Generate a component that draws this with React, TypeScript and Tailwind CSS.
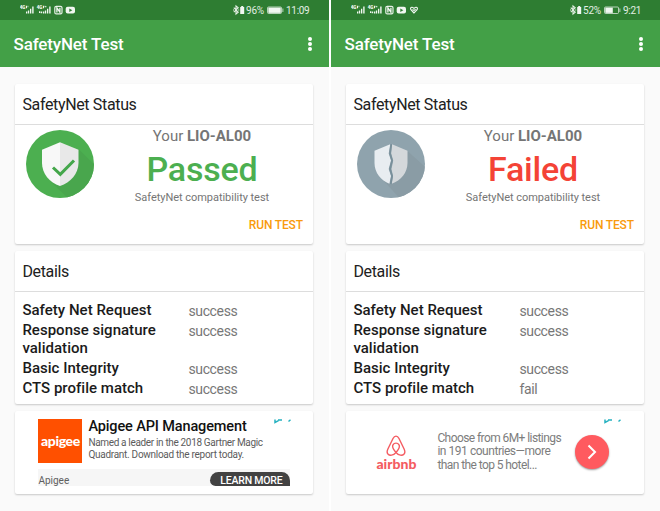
import React from "react";

type PhoneProps = { passed: boolean };

function Signal({ x, extra }: { x: number; extra: boolean }) {
  return (
    <g transform={`translate(${x} 0)`} fill="#f1f7f1">
      <text x="-.3" y="9.2" fontSize="4.6" fontWeight="900">4G</text>
      <path d="M6 11.600h1.300v2H6zM7.900 10.600h1.300v3H7.900zM10 8.700h1.300v4.900H10zM12.200 6.600h1.400v7h-1.400z" />
      <path d="M6 5.800h1v2.500H6zM7.600 5.800h.7v1.500h-.7z" />
      {extra && <path d="M2 11.200h1.200v1.800H2zM3.700 11.600h1.500v1.600H3.700zM8.300 6h1v1.300h-1z" />}
    </g>
  );
}

function StatusIcons({ passed }: PhoneProps) {
  return (
    <svg width="80" height="20" viewBox="0 0 80 20" className="block font-['Roboto',sans-serif]">
      <Signal x={0} extra={false} />
      <Signal x={17} extra />
      <rect x="34.800" y="6.300" width="7.200" height="7.600" rx="1.500" fill="none" stroke="#e6f0e6" strokeWidth="1.200" />
      <path d="M36.900 12.500V7.900l3 4.300V7.700" fill="none" stroke="#f1f7f1" strokeWidth="1.300" />
      <rect x="45.700" y="6.800" width="9.300" height="6.800" rx="2" fill="#f1f7f1" />
      <path d="M49.300 8.500v3.400l3-1.700z" fill="#2e7d32" />
      {!passed && (
        <path d="M63 13 59.900 9.700c-.8-1.200-.2-2.500 1-2.500.9 0 1.400.5 2.100 1.300.7-.8 1.200-1.300 2.100-1.300 1.200 0 1.800 1.300 1 2.500zM61.500 9.300l1.500 1.300 1.600-1.500" fill="none" stroke="#f1f7f1" strokeWidth="1.100" />
      )}
    </svg>
  );
}

function BluetoothIcon() {
  return (
    <svg width="13" height="20" viewBox="0 0 13 20" className="block">
      <path d="M.8 7.700 5.200 12.200 3 14V5.900L5.200 7.800.8 12.200M0 10h1M5.200 10h1" fill="none" stroke="#e6f0e6" strokeWidth="1.100" />
      <path d="M7.200 7h1V6h2v1h1v6.900h-4z" fill="#f1f7f1" />
    </svg>
  );
}

function Battery({ level }: { level: number }) {
  return (
    <svg width="17" height="20" viewBox="0 0 17 20" className="block">
      <rect x=".5" y="7" width="14" height="6.500" rx="1" fill="none" stroke="#dbe9dc" strokeWidth=".8" />
      <rect x="1.300" y="7.600" width={level} height="5.300" fill="#f1f7f1" />
      <path d="M15.500 8.500h.8v3.500h-.8z" fill="#dbe9dc" />
    </svg>
  );
}

function PassedShield() {
  return (
    <svg width="68" height="68" viewBox="0 0 68 68" className="block shrink-0">
      <clipPath id="ring-pass"><circle cx="34" cy="34" r="34" /></clipPath>
      <circle cx="34" cy="34" r="34" fill="#4caf50" />
      <path clipPath="url(#ring-pass)" d="M52.500 19 72 38.500V72H46L25 52l20-10z" fill="#49a64d" />
      <path d="M34 12.300 16 19.800V33c0 10.500 7.500 19.500 18 23z" fill="#f8f8f8" />
      <path d="M34 12.300 52.500 19.800V33c0 10.500-8 19.500-18.500 23z" fill="#e8e8e8" />
      <path d="m27 37.500 7.300 6.800L48 30.500" fill="none" stroke="#43a64a" strokeWidth="3" />
    </svg>
  );
}

function BrokenShield() {
  return (
    <svg width="68" height="68" viewBox="0 0 68 68" className="block shrink-0">
      <clipPath id="ring-fail"><circle cx="34" cy="34" r="34" /></clipPath>
      <circle cx="34" cy="34" r="34" fill="#8fa3ad" />
      <path clipPath="url(#ring-fail)" d="M50.500 21 72 40.500V72H46L26 50l20-10z" fill="#8a9ca5" />
      <path d="M33.200 14.200 17.500 20.700V33c0 9.500 6.500 17.500 14.900 20.700L34 46l-2.300-7 2.300-8.500-2.300-7z" fill="#e8edf1" />
      <path d="M35 14.200 50.500 20.700V33c0 9.500-6.500 17.500-15.700 20.700L36 46l-1.500-7 1.700-8.500-2-7z" fill="#d4d8db" />
      <path d="m34.300 14.200-1.300 9.300 2.100 7L33 39l2.100 7-1.400 8" fill="none" stroke="#788f9a" strokeWidth="1.700" />
    </svg>
  );
}

function AdMark() {
  return (
    <svg width="18" height="5" viewBox="0 0 18 5" className="block shrink-0">
      <path d="M1 .5v3l3.500-1.900M4 1h4M14.500 2.500 16.500.8" fill="none" stroke="#25b1c0" strokeWidth="1.500" />
    </svg>
  );
}

function ApigeeAd() {
  return (
    <div className="flex h-[83px] w-[298px] flex-col pl-[23px] pt-2">
      <div className="flex h-[50px]">
        <div className="flex h-[44px] w-[44px] shrink-0 items-center justify-center bg-[#ff5000] pb-px font-['Lato',sans-serif] text-[14px] font-black leading-none tracking-[-0.4px] text-white">
          apigee
        </div>
        <div className="w-[192px] shrink-0 whitespace-nowrap pl-1.5">
          <div className="-mt-px h-[18px] text-[14.500px] font-medium leading-[18px] tracking-[-0.13px] text-[#111]">Apigee API Management</div>
          <div className="pt-px text-[10px] leading-[11.500px] tracking-[-0.34px] text-[#5c5c5c]">
            Named a leader in the 2018 Gartner Magic
            <br />
            <span className="tracking-[-0.28px]">Quadrant. Download the report today.</span>
          </div>
        </div>
        <AdMark />
      </div>
      <div className="flex h-[17px] w-[252px] items-start justify-between overflow-hidden bg-[#f6f6f6]">
        <span className="pt-[5px] text-[10px] leading-[14px] text-[#606060]">Apigee</span>
        <span className="mt-[3px] h-[14px] w-[80px] rounded-t-[9px] rounded-bl-[6px] bg-[#424242] pl-0.5 pt-[2px] text-center text-[10.500px] font-medium leading-[13px] tracking-[-0.2px] text-white">
          LEARN MORE
        </span>
      </div>
    </div>
  );
}

function AirbnbAd() {
  return (
    <div className="flex h-[83px] w-[298px] pt-2">
      <div className="flex w-[91px] shrink-0 flex-col items-center pl-[9px] pt-4">
        <svg width="20" height="21" viewBox="0 0 20 21" className="block">
          <path d="M10 17.500C6.500 13.500 6 11.500 7 9.800c1.300-2.200 4.700-2.200 6 0 1 1.700.5 3.700-3 7.700-2.800 3.200-6.300 3.300-7.900 1.700-1.600-1.500-1-3.500-.2-5.200L7 3.500C8.600.3 11.400.3 13 3.500L18.100 14c.8 1.700 1.400 3.700-.2 5.200-1.600 1.600-5.100 1.500-7.900-1.700z" fill="none" stroke="#f45b61" strokeWidth="1.400" />
        </svg>
        <div className="font-['Lato',sans-serif] text-[14px] font-black leading-[15px] text-[#f45b61]">airbnb</div>
      </div>
      <div className="w-[138px] shrink-0 whitespace-nowrap pt-[13px] text-[12px] leading-[13.400px] tracking-[-0.58px] text-[#7d7d7d]">
        Choose from 6M+ listings
        <br />
        <span className="tracking-[-0.46px]">in 191 countries—more</span>
        <br />
        than the top 5 hotel...
      </div>
      <div className="pt-4">
        <div className="flex h-[34px] w-[34px] items-center justify-center rounded-full bg-[#ff5a5f] shadow-[0_1px_2px_#0006]">
          <svg width="10" height="16" viewBox="0 0 10 16"><path d="m1.500 1.500 6.500 6.500-6.500 6.500" fill="none" stroke="white" strokeWidth="2" /></svg>
        </div>
      </div>
      <div className="-ml-[5px]"><AdMark /></div>
    </div>
  );
}

function Row({ label, value, tall }: { label: React.ReactNode; value: string; tall?: boolean }) {
  return (
    <div className={`flex leading-[17.500px] ${tall ? "h-[38px]" : "h-[20.200px]"}`}>
      <div className="w-[166px] whitespace-nowrap text-[15px] font-medium tracking-[0.02px] text-[#1b1b1b]">{label}</div>
      <div className="pt-[0.600px] text-[14px] tracking-[-0.35px] text-[#777]">{value}</div>
    </div>
  );
}

const card = "rounded-[2px] bg-white shadow-[0_1px_2px_#0003]";

function Phone({ passed }: PhoneProps) {
  return (
    <section className="h-[511px] w-[329px] bg-[#fafafa]">
      <div className="flex h-5 items-center justify-between bg-[#2e7d32] pl-5 text-[10px] text-[#e2eee3]">
        <StatusIcons passed={passed} />
        <div className={`flex items-center whitespace-nowrap ${passed ? "w-[96px]" : "w-[90px]"}`}>
          <BluetoothIcon />
          <span className="mr-px w-[20px] tracking-[-0.2px]">{passed ? "96%" : "52%"}</span>
          <Battery level={passed ? 12.5 : 7.5} />
          <span className="pl-0.5 tracking-[-0.3px]">{passed ? "11:09" : "9:21"}</span>
        </div>
      </div>
      <header className="flex h-[47px] items-center justify-between bg-[#43a047] pl-[13.500px] pr-[17px]">
        <h1 className="pt-px text-[17px] font-medium leading-5 tracking-[-0.15px] text-white">SafetyNet Test</h1>
        <div className="flex flex-col gap-px pb-[6px] pt-1.5">
          <i className="h-1 w-1 rounded-full bg-white" />
          <i className="h-1 w-1 rounded-full bg-white" />
          <i className="h-1 w-1 rounded-full bg-white" />
        </div>
      </header>
      <main className="flex flex-col gap-[7px] pl-[15.400px] pt-[17px] text-[#212121]">
        <div className={`h-[160px] w-[298px] ${card}`}>
          <h2 className="h-[41px] border-b border-[#ddd] pl-[7px] text-[16px] leading-[41px] tracking-[-0.35px]">SafetyNet Status</h2>
          <div className="flex h-[88px] pl-[10.600px] pt-[5px]">
            {passed ? <PassedShield /> : <BrokenShield />}
            <div className="flex w-[216px] flex-col items-center whitespace-nowrap text-[#757575]">
              <div className="-mt-[3px] h-[18px] text-[15px] leading-[18px]">Your <b>LIO-AL00</b></div>
              <div className={`h-[46px] text-[34px] font-medium leading-[48px] tracking-[-0.2px] ${passed ? "text-[#4caf50]" : "text-[#f44336]"}`}>{passed ? "Passed" : "Failed"}</div>
              <div className="text-[11px] leading-[14px] tracking-[-0.04px]">SafetyNet compatibility test</div>
            </div>
          </div>
          <div className="pr-[10.500px] pt-[4px] text-right text-[12px] font-medium leading-[16px] tracking-[-0.15px] text-[#f99b0c]">RUN TEST</div>
        </div>
        <div className={`h-[153px] w-[298px] ${card}`}>
          <h2 className="h-[41px] border-b border-[#ddd] pl-[7px] text-[16px] leading-[41px] tracking-[-0.35px]">Details</h2>
          <div className="pl-[7px] pt-[10px]">
            <Row label="Safety Net Request" value="success" />
            <Row label={<>Response signature<br />validation</>} value="success" tall />
            <Row label="Basic Integrity" value="success" />
            <Row label="CTS profile match" value={passed ? "success" : "fail"} />
          </div>
        </div>
        <div className={`h-[83px] w-[298px] ${card}`}>{passed ? <ApigeeAd /> : <AirbnbAd />}</div>
      </main>
    </section>
  );
}

export default function App() {
  return (
    <div className="flex h-[511px] w-[660px] gap-[2px] overflow-hidden bg-white font-['Roboto',sans-serif]">
      <Phone passed />
      <Phone passed={false} />
    </div>
  );
}
